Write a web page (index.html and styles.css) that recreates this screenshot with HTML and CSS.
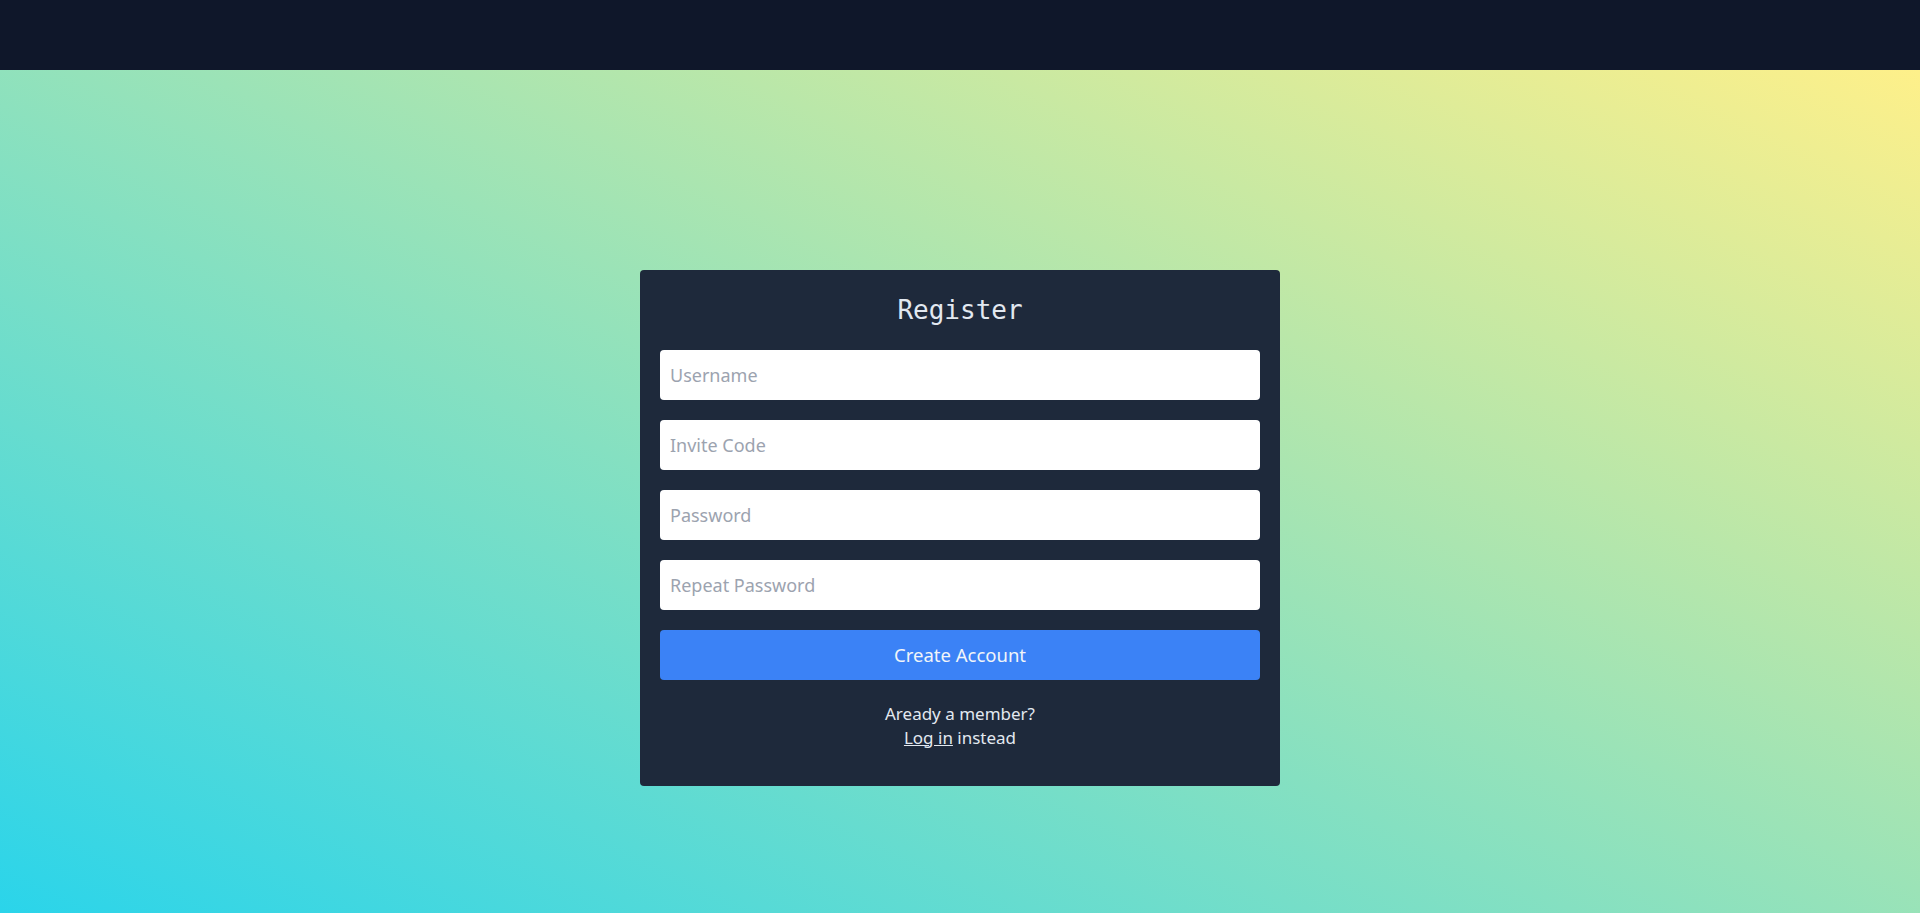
FILE: index.html
```html
<!DOCTYPE html>
<html lang="en">
<head>
<meta charset="utf-8">
<title>Register</title>
<link rel="stylesheet" href="styles.css">
</head>
<body>
<header class="navbar"></header>
<main class="page">
  <form class="card">
    <h1 class="title">Register</h1>
    <input class="field" type="text" placeholder="Username">
    <input class="field" type="text" placeholder="Invite Code">
    <input class="field" type="password" placeholder="Password">
    <input class="field" type="password" placeholder="Repeat Password">
    <button class="submit" type="button">Create Account</button>
    <p class="footer">Aready a member?<br><a href="#" class="link">Log in</a> instead</p>
  </form>
</main>
</body>
</html>
```
FILE: styles.css
```css
* { box-sizing: border-box; }
html, body { margin: 0; padding: 0; }
body {
  font-family: "Noto Sans", "Open Sans", sans-serif;
  background: #0f172a;
}
.navbar {
  height: 70px;
  background: #0f172a;
}
.page {
  min-height: 100vh;
  padding-top: 2px;
  display: flex;
  align-items: center;
  justify-content: center;
  background: linear-gradient(to top right, #22d3ee, #fef08a);
}
.card {
  width: 640px;
  background: #1e293b;
  border-radius: 4px;
  padding: 20px 20px 36px;
  display: flex;
  flex-direction: column;
  gap: 20px;
}
.title {
  margin: 0;
  height: 40px;
  line-height: 40px;
  text-align: center;
  font-family: "DejaVu Sans Mono", "Liberation Mono", monospace;
  font-weight: normal;
  font-size: 26px;
  color: #e2e8f0;
}
.field {
  height: 50px;
  width: 100%;
  border: none;
  border-radius: 4px;
  background: #fff;
  padding: 0 10px;
  font-family: inherit;
  font-size: 18px;
  color: #111827;
  outline: none;
}
.field::placeholder { color: #9ca3af; }
.submit {
  height: 50px;
  width: 100%;
  border: none;
  border-radius: 4px;
  background: #3b82f6;
  color: #f1f5f9;
  font-family: inherit;
  font-size: 18.5px;
  cursor: pointer;
}
.footer {
  margin: 2px 0 0;
  text-align: center;
  color: #e2e8f0;
  font-size: 17px;
  line-height: 24px;
}
.link { color: #e2e8f0; text-decoration: underline; }
```
